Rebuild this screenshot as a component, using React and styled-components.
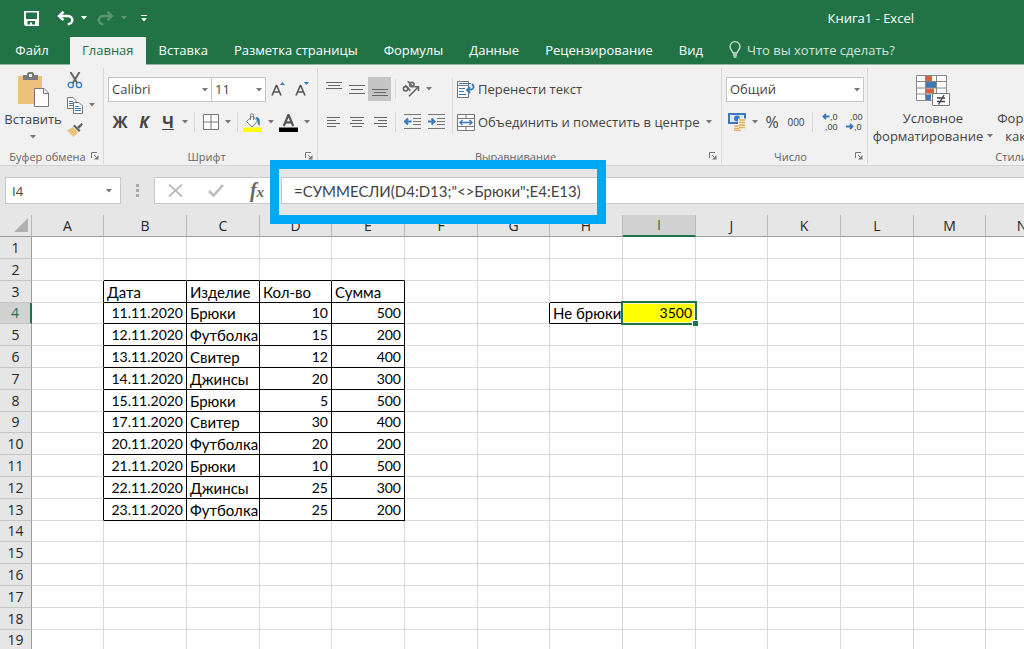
import React from 'react';
import styled, { createGlobalStyle } from 'styled-components';

const UI_FONT = '"Open Sans", "Noto Sans", sans-serif';
const CELL_FONT = 'Lato, "Noto Sans", sans-serif';

const GlobalStyle = createGlobalStyle`
    * {
        box-sizing: border-box;
    }

    body {
        margin: 0;
        overflow: hidden;
        font-family: ${UI_FONT};
        color: #444;
    }

    button, input, select {
        margin: 0;
        padding: 0;
        border: 0;
        border-radius: 0;
        background: none;
        font-family: inherit;
        color: inherit;
    }

    svg {
        display: block;
        flex: none;
    }
`;

const Page = styled.div`
    display: flex;
    flex-direction: column;
    height: 100vh;
    overflow: hidden;
    background-color: white;
`;

/* title bar and tabs */

const TitleBar = styled.header`
    display: flex;
    align-items: center;
    flex: none;
    height: 36px;
    padding: 0 110px 0 24px;
    background-color: #217346;
    color: white;
`;

const QuickButton = styled.button`
    display: flex;
    align-items: center;
    height: 24px;
    gap: 7px;
    margin-right: ${props => props.$gap || 0}px;
    opacity: ${props => (props.$faded ? 0.25 : 1)};
`;

const DocTitle = styled.h1`
    margin: 0 0 0 auto;
    font-size: 13px;
    font-weight: 400;
    white-space: nowrap;
`;

const TabBar = styled.nav`
    display: flex;
    flex: none;
    height: 29px;
    padding-top: 1px;
    background-color: #217346;
    border-bottom: 1px solid #8fb9a2;
`;

const Tab = styled.button`
    flex: none;
    height: 28px;
    min-width: ${props => (props.$file ? 64 : 0)}px;
    margin-right: ${props => (props.$file ? 6 : 0)}px;
    padding: 0 ${props => (props.$active ? 12 : 13)}px 2px;
    font-size: 13px;
    white-space: nowrap;
    color: ${props => (props.$active ? '#217346' : 'white')};
    background-color: ${props => (props.$active ? '#f1f1f1' : 'transparent')};
`;

const TellMe = styled.button`
    display: flex;
    align-items: center;
    flex: none;
    gap: 6px;
    margin-left: 13px;
    padding-bottom: 2px;
    font-size: 13px;
    color: #d3e3da;
`;

/* ribbon */

const Ribbon = styled.section`
    display: flex;
    flex: none;
    height: 101px;
    padding-top: 3px;
    overflow: hidden;
    background-color: #f1f1f1;
    border-bottom: 1px solid #d2d2d2;
`;

const Group = styled.div`
    display: flex;
    flex-direction: column;
    flex: none;
    width: ${props => props.$width}px;
    height: 96px;
    padding: 0 4px;
    border-right: 1px solid #d8d8d8;
`;

const GroupBody = styled.div`
    display: flex;
    align-items: flex-start;
    flex: 1;
`;

const GroupFooter = styled.div`
    display: flex;
    align-items: center;
    height: 16px;
    font-size: 11px;
    white-space: nowrap;
    color: #666;
`;

const GroupLabel = styled.span`
    flex: 1;
    text-align: center;
`;

const Rows = styled.div`
    display: flex;
    flex-direction: column;
    gap: 7px;
    padding-top: 8px;
`;

const Row = styled.div`
    display: flex;
    align-items: center;
    height: 26px;
`;

const Tool = styled.button`
    display: flex;
    align-items: center;
    justify-content: center;
    flex: none;
    width: ${props => props.$width || 24}px;
    height: 24px;
    font-size: ${props => props.$size || 16}px;
    font-weight: ${props => (props.$bold ? 700 : 400)};
    font-style: ${props => (props.$italic ? 'italic' : 'normal')};
    text-decoration: ${props => (props.$underline ? 'underline' : 'none')};
    background-color: ${props => (props.$active ? '#c5c5c5' : 'transparent')};
`;

const CaretTool = styled(Tool)`
    justify-content: flex-end;
    gap: 6px;
`;

const TextTool = styled.button`
    display: flex;
    align-items: center;
    gap: 3px;
    height: 24px;
    font-size: 13px;
    white-space: nowrap;
`;

const Divider = styled.span`
    flex: none;
    width: 1px;
    height: ${props => props.$height || 20}px;
    margin: ${props => props.$top || 0}px ${props => props.$gap || 4}px 0;
    background-color: #d8d8d8;
`;

const SelectBox = styled.label`
    display: flex;
    position: relative;
    width: ${props => props.$width}px;

    & + & {
        margin-left: -1px;
    }

    select {
        width: 100%;
        height: 25px;
        padding: 0 3px;
        appearance: none;
        font-size: 13px;
        background-color: white;
        border: 1px solid #c6c6c6;
    }

    svg {
        position: absolute;
        right: 4px;
        top: 11px;
        pointer-events: none;
    }
`;

const BigButton = styled.button`
    display: flex;
    flex-direction: column;
    align-items: center;
    justify-content: flex-end;
    flex: none;
    width: ${props => props.$width}px;
    height: 73px;
    margin-top: 4px;
    font-size: 13px;
    line-height: 18px;
    white-space: nowrap;

    > svg:first-child {
        margin-bottom: 2px;
    }
`;

const CaretLine = styled.span`
    display: flex;
    align-items: center;
    gap: 4px;
    height: 18px;
`;

const SmallStack = styled.div`
    display: flex;
    flex-direction: column;
    gap: 1px;
    margin-left: 3px;
`;

/* formula bar */

const FormulaBar = styled.section`
    display: flex;
    position: relative;
    flex: none;
    align-items: center;
    height: 49px;
    padding-left: 5px;
    background-color: #e6e6e6;
`;

const NameBox = styled.label`
    display: flex;
    align-items: center;
    width: 116px;
    height: 27px;
    padding-right: 8px;
    background-color: white;
    border: 1px solid #c9c9c9;

    input {
        flex: 1;
        min-width: 0;
        padding-left: 6px;
        font-size: 13px;
    }
`;

const Grip = styled.span`
    display: flex;
    flex-direction: column;
    align-items: center;
    gap: 2px;
    width: 33px;

    i {
        width: 3px;
        height: 3px;
        background-color: #a9a9a9;
    }
`;

const FormulaButtons = styled.div`
    display: flex;
    align-items: center;
    width: 124px;
    height: 27px;
    background-color: white;
    border: 1px solid #c9c9c9;
`;

const FormulaInput = styled.input`
    && {
        flex: 1;
        min-width: 0;
        height: 27px;
        margin-left: 3px;
        padding-left: 12px;
        font-family: ${CELL_FONT};
        font-size: 15px;
        background-color: white;
        border: 1px solid #c9c9c9;
        border-right: 0;
    }
`;

const Highlight = styled.div`
    position: absolute;
    z-index: 2;
    left: 270px;
    top: -6px;
    width: 336px;
    height: 64px;
    border: 9px solid #00a8f3;
    pointer-events: none;
`;

/* sheet */

const Sheet = styled.main`
    flex: 1;
    min-height: 0;
    overflow: hidden;
`;

const Grid = styled.table`
    width: 1059px;
    table-layout: fixed;
    border-collapse: separate;
    border-spacing: 0;
    font-family: ${CELL_FONT};
    color: black;

    tr {
        height: 22px;
    }

    tbody tr:nth-child(5n + 4) {
        height: 21px;
    }
`;

const Corner = styled.td`
    padding: 0 3px 2px 0;
    background-color: #e6e6e6;
    border-right: 1px solid #b5b5b5;
    border-bottom: 1px solid #9d9d9d;

    svg {
        margin-left: auto;
    }
`;

const ColHead = styled.th`
    padding: 0;
    font-family: ${UI_FONT};
    font-size: 14px;
    line-height: 18px;
    font-weight: 400;
    color: ${props => (props.$active ? '#217346' : '#262626')};
    background-color: ${props => (props.$active ? '#d2d2d2' : '#e6e6e6')};
    border-right: 1px solid #b9b9b9;
    border-bottom: ${props => (props.$active ? '2px solid #217346' : '1px solid #9d9d9d')};
`;

const RowHead = styled.th`
    padding: 0;
    font-family: ${UI_FONT};
    font-size: 14px;
    line-height: 18px;
    font-weight: 400;
    color: ${props => (props.$active ? '#217346' : '#262626')};
    background-color: ${props => (props.$active ? '#d2d2d2' : '#e6e6e6')};
    border-right: ${props => (props.$active ? '2px solid #217346' : '1px solid #9d9d9d')};
    border-bottom: 1px solid #c4c4c4;
`;

const Cell = styled.td`
    position: relative;
    padding: 0 3px;
    font-size: ${props => (props.$right ? 14 : 15)}px;
    line-height: 18px;
    white-space: nowrap;
    text-align: ${props => (props.$right ? 'right' : 'left')};
    border-right: 1px solid ${props => (props.$edgeRight ? 'black' : '#d9d9d9')};
    border-bottom: 1px solid ${props => (props.$edgeBottom ? 'black' : '#d9d9d9')};
    background-color: ${props => (props.$fill || 'transparent')};
`;

const Selection = styled.span`
    position: absolute;
    z-index: 1;
    top: -2px;
    right: -2px;
    bottom: -2px;
    left: -2px;
    border: 2px solid #217346;
    box-shadow: inset 0 0 0 1px #f4f7c8;

    &::after {
        content: '';
        position: absolute;
        right: -3px;
        bottom: -3px;
        width: 5px;
        height: 5px;
        background-color: #217346;
        outline: 1px solid white;
    }
`;

const Caret = ({ color = '#777' }) => (
    <svg width="6" height="4" viewBox="0 0 6 4"><path d="M0 0h6L3 3.5z" fill={color} /></svg>
);

const Launcher = () => (
    <svg width="8" height="8" viewBox="0 0 8 8" fill="none" stroke="#777">
        <path d="M.5 6V.5H6M3 3l3 3" />
        <path d="M7.5 3v4.5H3z" fill="#777" stroke="none" />
    </svg>
);

const SaveIcon = () => (
    <svg width="15" height="15" viewBox="0 0 15 15">
        <path fillRule="evenodd" fill="white" d="M0 0h15v15H1.500L0 13.500zM2 1.500V8h11V1.500zM3.500 10v3.500H6V11.500h2v2h3V10z" />
    </svg>
);

const UndoIcon = ({ flip }) => (
    <svg width="17" height="15" viewBox="0 0 17 15" fill="none" stroke="white" strokeWidth="2.500">
        <g transform={flip ? 'translate(17 0) scale(-1 1)' : undefined}>
            <path d="M2 5h8.500c3 0 4.800 1.800 4.800 4s-2 4.300-4.600 4.300" />
            <path d="M6.500 .8L2 5l4.500 4.200" />
        </g>
    </svg>
);

const CustomizeIcon = () => (
    <svg width="6" height="7" viewBox="0 0 6 7"><path d="M0 0h6v1H0zM0 3h6L3 6.500z" fill="white" /></svg>
);

const BulbIcon = () => (
    <svg width="12" height="17" viewBox="0 0 12 17" fill="none" stroke="#d3e3da" strokeWidth="1.300">
        <path d="M4 12c0-2-3-3.200-3-6.300a5 5 0 0 1 10 0C11 8.800 8 10 8 12zM4 14h4M4.500 16h3" />
    </svg>
);

const PasteIcon = () => (
    <svg width="32" height="36" viewBox="0 0 32 36">
        <path d="M1 4h24v28H1z" fill="#ecc27b" />
        <path d="M6 3h4V1.500L11.500 0h4L17 1.500V3h4v5H6z" fill="#7a7a7a" />
        <path d="M12 2h3v3h-3z" fill="#f1f1f1" />
        <path d="M17.500 16.500H27l4.500 4.500v13.500h-14z" fill="white" stroke="#777" />
        <path d="M26.500 16.500v5h5" fill="none" stroke="#777" />
    </svg>
);

const CutIcon = () => (
    <svg width="16" height="17" viewBox="0 0 16 17" fill="none">
        <path d="M3.500 0L10.500 11.500M12.500 0L5.500 11.500" stroke="#666" strokeWidth="2" />
        <circle cx="3.800" cy="13" r="2.600" stroke="#3b7ab8" strokeWidth="1.300" />
        <circle cx="12" cy="13" r="2.600" stroke="#3b7ab8" strokeWidth="1.300" />
    </svg>
);

const CopyIcon = () => (
    <svg width="16" height="17" viewBox="0 0 16 17" fill="white" stroke="#777">
        <path d="M.5 .5H6l3 3v8H.5z" />
        <path d="M2 4.500h4M2 6.500h4M2 8.500h4" stroke="#3b7ab8" />
        <path d="M6.500 5.500H12l3.500 3.500v7.500h-9z" />
        <path d="M8 9.500h4M8 11.500h6M8 13.500h6" stroke="#3b7ab8" />
    </svg>
);

const BrushIcon = () => (
    <svg width="16" height="14" viewBox="0 0 16 14">
        <path d="M0 7.500l6-3.500 5 5.500L6.500 14z" fill="#ecc27b" />
        <path d="M6 3l1.500-1.500 6 6L12 9z" fill="#666" />
        <path d="M10 4l4.500-4L16 1.500 12 6z" fill="#666" />
    </svg>
);

const GrowIcon = ({ shrink }) => (
    <svg width="14" height="16" viewBox="0 0 14 16">
        <path d="M1 14.500L5.300 4.500h.4L10 14.500M2.700 11h5.600" fill="none" stroke="#555" strokeWidth="1.600" />
        <path d={shrink ? 'M9 1h5l-2.500 3z' : 'M9 4h5l-2.500-3z'} fill="#3b7ab8" />
    </svg>
);

const BorderIcon = () => (
    <svg width="16" height="16" viewBox="0 0 16 16" fill="white" stroke="#777">
        <path d="M.5 .5h15v15H.5zM8 .5v15M.5 8h15" />
    </svg>
);

const FillIcon = () => (
    <svg width="19" height="19" viewBox="0 0 19 19">
        <path d="M3.500 8.500l6-5.500 5 5-5.500 6z" fill="white" stroke="#777" />
        <path d="M7.500 7V2.200c0-2 3-2 3 0V7" fill="none" stroke="#777" />
        <path d="M12.500 4c4 0 5 2.500 4 9-1.500-1-2-3-2-5z" fill="#3b7ab8" />
        <path d="M0 14.500h19V19H0z" fill="#ff0" />
    </svg>
);

const FontColorIcon = () => (
    <svg width="19" height="19" viewBox="0 0 19 19">
        <path d="M4.800 13L9.300 2h.4l4.500 11M6.500 9.300h6" fill="none" stroke="#555" strokeWidth="2.200" />
        <path d="M0 14.500h19V19H0z" fill="black" />
    </svg>
);

// every entry is one stroke: [left, right, y]
const Lines = ({ lines }) => (
    <svg width="18" height="24" viewBox="0 0 18 24" stroke="#666">
        {lines.map(([x1, x2, y]) => <path key={y} d={`M${x1} ${y + 0.5}H${x2}`} />)}
    </svg>
);

const OrientationIcon = () => (
    <svg width="18" height="16" viewBox="0 0 18 16" fill="none" stroke="#666" strokeWidth="1.600">
        <circle cx="3.600" cy="7.800" r="2.200" />
        <path d="M3.200 4.200l5.200 5.400M5.800 0l5.600 6.200" />
        <circle cx="9.800" cy="3.600" r="2.200" />
        <path d="M7 15.300l9-9M12.200 5.700H16.500V10" />
    </svg>
);

const IndentIcon = ({ right }) => (
    <svg width="17" height="16" viewBox="0 0 17 16" fill="none" stroke="#777">
        <path d="M0 .5h17M9 4.500h8M9 7.500h8M9 10.500h8M0 14.500h17" />
        <path d={right ? 'M0 7.500h6M3.500 4.500l3 3-3 3' : 'M1.500 7.500h6M4 4.500l-3 3 3 3'} stroke="#3b7ab8" strokeWidth="2" />
    </svg>
);

const WrapIcon = () => (
    <svg width="18" height="17" viewBox="0 0 18 17" fill="none" stroke="#777">
        <path d="M.5 .5h11v4H.5zM.5 4.500h11v12H.5z" fill="white" />
        <path d="M2 2.500h12M2 7.500h6M2 10.500h5M2 13.500h7" stroke="#3b7ab8" />
        <path d="M15 3c3 3 1.500 6-4 6M13 6l-3 3 3 3" stroke="#3b7ab8" strokeWidth="1.800" />
    </svg>
);

const MergeIcon = () => (
    <svg width="18" height="17" viewBox="0 0 18 17" fill="white" stroke="#777">
        <path d="M.5 .5h17v16H.5zM.5 4.500h17M.5 12.500h17M9 .5v4M9 12.500v4" />
        <path d="M3 8.500h12M5.500 6l-2.500 2.500L5.500 11M12.500 6L15 8.500 12.500 11" fill="none" stroke="#3b7ab8" strokeWidth="1.500" />
    </svg>
);

const CurrencyIcon = () => (
    <svg width="18" height="18" viewBox="0 0 18 18">
        <path d="M0 0h18v11H0z" fill="#3b7ab8" />
        <path d="M2 2h14v7H2z" fill="#dfe9f3" />
        <circle cx="9" cy="5.500" r="3" fill="#3b7ab8" />
        <path d="M10 5.500h8v11H5v-5h5z" fill="#f1f1f1" />
        <path d="M11 7h6M11 9.500h6M11 12h6M6 13h5M6 15.500h5M11 14.500h6M6 17.500h7" stroke="#e3b15f" strokeWidth="1.500" />
    </svg>
);

const DecimalIcon = ({ more }) => (
    <svg width="18" height="22" viewBox="0 0 18 22" fontFamily='"Liberation Sans", sans-serif' fontSize="9" fill="#444">
        <text x={more ? 8 : 4} y="9">{more ? ',0' : ',00'}</text>
        <text x={more ? 3 : 8} y="19">{more ? ',00' : ',0'}</text>
        <path d={more ? 'M1.500 5.500h6M4 3L1.500 5.500 4 8' : 'M0 15.500h6M4 13l2.500 2.500L4 18'} fill="none" stroke="#3b7ab8" strokeWidth="1.800" />
    </svg>
);

const ConditionalIcon = () => (
    <svg width="34" height="32" viewBox="0 0 34 32">
        <path d="M.5 .5h30v25H.5z" fill="white" />
        <path d="M10 1h6v5h-6zM10 13.500h8v5h-8z" fill="#d9603b" />
        <path d="M10 7h10v6H10zM10 19.500h5V25h-5z" fill="#3b7ab8" />
        <path d="M.5 .5h30v25H.5zM.5 6.500h30M.5 13h30M.5 19h30M9.500 .5v25M20.500 .5v25" fill="none" stroke="#888" />
        <path d="M16.500 18.500h17v12h-17z" fill="white" stroke="#777" />
        <path d="M21 23h8M21 26.500h8M28 20l-5.500 9.500" stroke="#444" strokeWidth="1.400" />
    </svg>
);

const TableStyleIcon = () => (
    <svg width="34" height="32" viewBox="0 0 34 32">
        <path d="M.5 .5h30v25H.5zM.5 7h30M.5 13h30M.5 19h30M10.500 .5v25M20.500 .5v25" fill="white" stroke="#888" />
    </svg>
);

const CancelIcon = () => (
    <svg width="15" height="13" viewBox="0 0 15 13"><path d="M1 .5l13 12M14 .5L1 12.500" stroke="#bbb" strokeWidth="1.800" /></svg>
);

const CheckIcon = () => (
    <svg width="16" height="13" viewBox="0 0 16 13"><path d="M1 7l4.500 4.500L15 1" fill="none" stroke="#bbb" strokeWidth="2.600" /></svg>
);

const FxLabel = styled.span`
    font-family: "Liberation Serif", serif;
    font-size: 20px;
    font-style: italic;
    font-weight: 700;
    color: #666;

    small {
        font-size: 15px;
    }
`;

const CornerIcon = () => (
    <svg width="14" height="14" viewBox="0 0 14 14"><path d="M14 0v14H0z" fill="#b1b1b1" /></svg>
);

const tabs = ['Файл', 'Главная', 'Вставка', 'Разметка страницы', 'Формулы', 'Данные', 'Рецензирование', 'Вид'];

const alignments = [
    { name: 'По верхнему краю', lines: [[1, 17, 5], [3, 15, 8], [1, 17, 11]] },
    { name: 'По середине', lines: [[1, 17, 8], [3, 15, 12], [1, 17, 16]] },
    { name: 'По нижнему краю', lines: [[1, 17, 12], [3, 15, 15], [1, 17, 18]], active: true },
];

const textAlignments = [
    { name: 'По левому краю', lines: [[2, 15, 7], [2, 11, 10], [2, 15, 13], [2, 11, 16]] },
    { name: 'По центру', lines: [[2, 16, 7], [4, 14, 10], [2, 16, 13], [4, 14, 16]] },
    { name: 'По правому краю', lines: [[3, 16, 7], [7, 16, 10], [3, 16, 13], [7, 16, 16]] },
];

const columns = [
    ['A', 72], ['B', 83], ['C', 73], ['D', 72], ['E', 73], ['F', 73], ['G', 72],
    ['H', 73], ['I', 73], ['J', 72], ['K', 73], ['L', 73], ['M', 72], ['N', 73],
];

const data = [
    ['Дата', 'Изделие', 'Кол-во', 'Сумма'],
    ['11.11.2020', 'Брюки', 10, 500],
    ['12.11.2020', 'Футболка', 15, 200],
    ['13.11.2020', 'Свитер', 12, 400],
    ['14.11.2020', 'Джинсы', 20, 300],
    ['15.11.2020', 'Брюки', 5, 500],
    ['17.11.2020', 'Свитер', 30, 400],
    ['20.11.2020', 'Футболка', 20, 200],
    ['21.11.2020', 'Брюки', 10, 500],
    ['22.11.2020', 'Джинсы', 25, 300],
    ['23.11.2020', 'Футболка', 25, 200],
];

const ROW_COUNT = 19;
const FIRST_ROW = 3;
const FIRST_COL = 1;

function cellProps(row, col) {
    const r = row - FIRST_ROW;
    const c = col - FIRST_COL;
    const inRows = r >= 0 && r < data.length;
    const inCols = c >= 0 && c < 4;
    const value = inRows && inCols ? data[r][c] : null;

    if (row === 4 && col === 7) return { value: 'Не брюки', $edgeRight: true, $edgeBottom: true };
    if (row === 4 && col === 8) return { value: 3500, $right: true, $fill: '#ff0' };

    return {
        value,
        $right: r > 0 && (c === 0 || c > 1),
        $edgeRight: (inRows && c >= -1 && c < 4) || (row === 4 && col === 6),
        $edgeBottom: (inCols && r >= -1 && r < data.length) || (row === 3 && col === 7),
    };
}

function Select({ label, width, value }) {
    return (
        <SelectBox $width={width}>
            <select aria-label={label} defaultValue={value}>
                <option>{value}</option>
            </select>
            <Caret />
        </SelectBox>
    );
}

function RibbonGroup({ label, width, launcher = true, children }) {
    return (
        <Group $width={width}>
            <GroupBody>{children}</GroupBody>
            <GroupFooter>
                <GroupLabel>{label}</GroupLabel>
                {launcher && <button aria-label={`${label}: параметры`}><Launcher /></button>}
            </GroupFooter>
        </Group>
    );
}

function App() {
    return (
        <Page>
            <GlobalStyle />
            <TitleBar>
                <QuickButton aria-label="Сохранить" $gap={18}><SaveIcon /></QuickButton>
                <QuickButton aria-label="Отменить" $gap={10}><UndoIcon /><Caret color="white" /></QuickButton>
                <QuickButton aria-label="Вернуть" $gap={14} $faded><UndoIcon flip /><Caret color="white" /></QuickButton>
                <QuickButton aria-label="Настройка панели"><CustomizeIcon /></QuickButton>
                <DocTitle>Книга1 - Excel</DocTitle>
            </TitleBar>
            <TabBar>
                {tabs.map(tab => (
                    <Tab key={tab} $file={tab === 'Файл'} $active={tab === 'Главная'}>{tab}</Tab>))}
                <TellMe><BulbIcon />Что вы хотите сделать?</TellMe>
            </TabBar>

            <Ribbon>
                <RibbonGroup label="Буфер обмена" width={104}>
                    <BigButton $width={58}>
                        <PasteIcon />
                        Вставить
                        <CaretLine><Caret /></CaretLine>
                    </BigButton>
                    <SmallStack>
                        <Tool $width={20} aria-label="Вырезать"><CutIcon /></Tool>
                        <CaretTool $width={30} aria-label="Копировать"><CopyIcon /><Caret /></CaretTool>
                        <Tool $width={20} aria-label="Формат по образцу"><BrushIcon /></Tool>
                    </SmallStack>
                </RibbonGroup>

                <RibbonGroup label="Шрифт" width={214}>
                    <Rows>
                        <Row>
                            <Select label="Шрифт" width={104} value="Calibri" />
                            <Select label="Размер шрифта" width={55} value="11" />
                            <Tool aria-label="Увеличить размер"><GrowIcon /></Tool>
                            <Tool aria-label="Уменьшить размер"><GrowIcon shrink /></Tool>
                        </Row>
                        <Row>
                            <Tool $bold>Ж</Tool>
                            <Tool $bold $italic>К</Tool>
                            <Tool $bold $underline>Ч</Tool>
                            <Tool $width={10} aria-label="Подчеркивание"><Caret /></Tool>
                            <Divider />
                            <CaretTool $width={32} aria-label="Границы"><BorderIcon /><Caret /></CaretTool>
                            <Divider $gap={6} />
                            <CaretTool $width={30} aria-label="Цвет заливки"><FillIcon /><Caret /></CaretTool>
                            <CaretTool $width={36} aria-label="Цвет текста"><FontColorIcon /><Caret /></CaretTool>
                        </Row>
                    </Rows>
                </RibbonGroup>

                <RibbonGroup label="Выравнивание" width={404}>
                    <Rows>
                        <Row>
                            {alignments.map(({ name, lines, active }) => (
                                <Tool key={name} $width={23} aria-label={name} $active={active}><Lines lines={lines} /></Tool>))}
                            <Divider />
                            <CaretTool $width={32} aria-label="Ориентация"><OrientationIcon /><Caret /></CaretTool>
                        </Row>
                        <Row>
                            {textAlignments.map(({ name, lines }) => (
                                <Tool key={name} $width={23} aria-label={name}><Lines lines={lines} /></Tool>))}
                            <Divider />
                            <Tool aria-label="Уменьшить отступ"><IndentIcon /></Tool>
                            <Tool aria-label="Увеличить отступ"><IndentIcon right /></Tool>
                        </Row>
                    </Rows>
                    <Divider $height={56} $gap={4} $top={10} />
                    <Rows>
                        <Row><TextTool><WrapIcon />Перенести текст</TextTool></Row>
                        <Row>
                            <TextTool><MergeIcon />Объединить и поместить в центре</TextTool>
                            <Tool $width={20} aria-label="Варианты объединения"><Caret /></Tool>
                        </Row>
                    </Rows>
                </RibbonGroup>

                <RibbonGroup label="Число" width={146}>
                    <Rows>
                        <Row><Select label="Числовой формат" width={138} value="Общий" /></Row>
                        <Row>
                            <CaretTool $width={32} aria-label="Финансовый формат"><CurrencyIcon /><Caret /></CaretTool>
                            <Tool $width={28} $size={16}>%</Tool>
                            <Tool $width={20} $size={10}>000</Tool>
                            <Divider $gap={6} />
                            <Tool aria-label="Увеличить разрядность"><DecimalIcon more /></Tool>
                            <Tool aria-label="Уменьшить разрядность"><DecimalIcon /></Tool>
                        </Row>
                    </Rows>
                </RibbonGroup>

                <RibbonGroup label="Стили" width={288} launcher={false}>
                    <BigButton $width={122}>
                        <ConditionalIcon />
                        Условное
                        <CaretLine>форматирование<Caret /></CaretLine>
                    </BigButton>
                    <BigButton $width={108}>
                        <TableStyleIcon />
                        Форматировать
                        <CaretLine>как таблицу<Caret /></CaretLine>
                    </BigButton>
                </RibbonGroup>
            </Ribbon>

            <FormulaBar>
                <NameBox>
                    <input aria-label="Имя ячейки" defaultValue="I4" />
                    <Caret />
                </NameBox>
                <Grip><i /><i /><i /></Grip>
                <FormulaButtons>
                    <Tool $width={40} aria-label="Отмена"><CancelIcon /></Tool>
                    <Tool $width={42} aria-label="Ввод"><CheckIcon /></Tool>
                    <Tool $width={40} aria-label="Вставить функцию"><FxLabel>f<small>x</small></FxLabel></Tool>
                </FormulaButtons>
                <FormulaInput aria-label="Строка формул" defaultValue={'=СУММЕСЛИ(D4:D13;"<>Брюки";E4:E13)'} />
                <Highlight />
            </FormulaBar>

            <Sheet>
                <Grid>
                    <colgroup>
                        <col width="32" />
                        {columns.map(([name, width]) => <col key={name} width={width} />)}
                    </colgroup>
                    <thead>
                        <tr>
                            <Corner><CornerIcon /></Corner>
                            {columns.map(([name]) => <ColHead key={name} $active={name === 'I'}>{name}</ColHead>)}
                        </tr>
                    </thead>
                    <tbody>
                        {Array.from({ length: ROW_COUNT }, (_, i) => i + 1).map(row => (
                            <tr key={row}>
                                <RowHead $active={row === 4}>{row}</RowHead>
                                {columns.map(([name], col) => {
                                    const { value, ...rest } = cellProps(row, col);
                                    return (
                                        <Cell key={name} {...rest}>
                                            {value}
                                            {row === 4 && name === 'I' && <Selection />}
                                        </Cell>
                                    );
                                })}
                            </tr>))}
                    </tbody>
                </Grid>
            </Sheet>
        </Page>
    );
}

export default App;
